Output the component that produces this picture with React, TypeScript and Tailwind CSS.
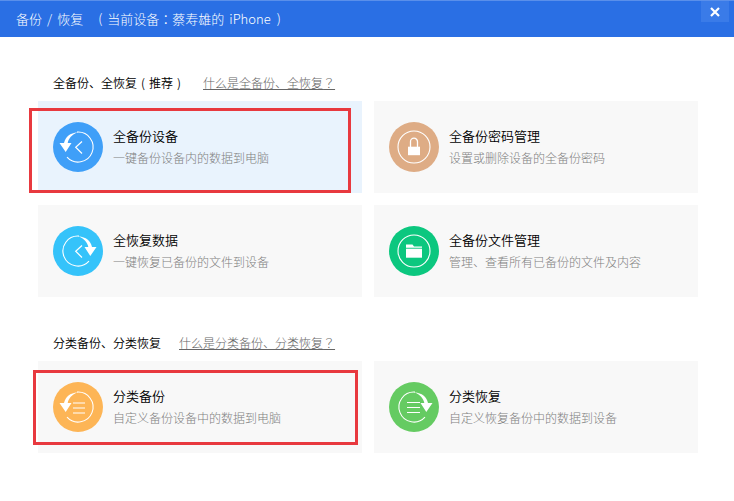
const font = "[font-family:'Noto_Sans_CJK_SC','Noto_Sans',sans-serif]"

// centred fullwidth punctuation, the TC cut sets these in the middle of the em
function Tc({ children }: { children: string }) {
  return <span className="[font-family:'Noto_Sans_CJK_TC',sans-serif]">{children}</span>
}

function Paren({ children }: { children: string }) {
  return <span className="inline-block w-[1em] text-center">{children}</span>
}

function RingIcon({ kind }: { kind: 'backup' | 'restore' | 'listBackup' | 'listRestore' }) {
  const isBackup = kind === 'backup' || kind === 'listBackup'
  const isList = kind === 'listBackup' || kind === 'listRestore'
  return (
    <svg viewBox="0 0 50 50" className="size-[50px]" fill="none" stroke="white">
      <g transform={isBackup ? undefined : 'translate(50 0) scale(-1 1)'}>
        <path d="M24 10.100A15 15 0 1 1 14 35.200" strokeWidth="1.100" />
        <path d="M24.500 10.300C17 11 12.500 15 11 21L6.500 21 12.700 30 18.500 21 14.700 21C15.500 16.500 19 12.500 24.500 10.300Z" fill="white" stroke="none" />
      </g>
      {isList ? (
        <path d={isBackup ? 'M20 21H32M20 26H32M20 31H32' : 'M18 20.500H31M18 25.500H31M18 30.500H31'} strokeWidth="1.100" />
      ) : (
        <path d="M29 19.500L22.700 25.300 29 31.500" strokeWidth="1.200" />
      )}
    </svg>
  )
}

function LockIcon() {
  return (
    <svg viewBox="0 0 50 50" className="size-[50px]" fill="none" stroke="white">
      <circle cx="25" cy="25" r="16" strokeWidth="1.100" />
      <path d="M21.500 25v-5.300a3.500 3.500 0 0 1 7 0V25" strokeWidth="1.300" />
      <rect x="19" y="24.700" width="12" height="8.500" fill="white" stroke="none" />
    </svg>
  )
}

function FolderIcon() {
  return (
    <svg viewBox="0 0 50 50" className="size-[50px]" fill="none" stroke="white">
      <circle cx="25" cy="25" r="16" strokeWidth="1.100" />
      <path d="M17 18.500h6.500l1.500 2H33v1.300H17z" fill="white" stroke="none" />
      <rect x="17" y="22.700" width="16" height="9" fill="white" stroke="none" />
    </svg>
  )
}

function Card({
  color,
  icon,
  title,
  sub,
  bg = 'bg-[#f8f8f8]',
}: {
  color: string
  icon: React.ReactNode
  title: string
  sub: string
  bg?: string
}) {
  return (
    <div className={`flex h-[92px] w-[324px] items-center pl-[15px] ${bg}`}>
      <div className={`size-[50px] shrink-0 rounded-full ${color}`}>{icon}</div>
      <div className="ml-[10px]">
        <p className="text-[13px] leading-[18px] font-[350] text-black">{title}</p>
        <p className="mt-[4px] text-[12px] leading-[18px] font-light text-[#808080]">{sub}</p>
      </div>
    </div>
  )
}

export default function App() {
  return (
    <div className={`relative h-[501px] w-[734px] overflow-hidden bg-white ${font}`}>
      <header className="flex h-[37px] items-center justify-between border-t border-[#5a8fea] bg-[#2a6fe4] pl-[16px] text-[13px] font-light text-white">
        <span className="whitespace-pre">
          备份<span className="mx-[5px]">/</span>恢复
          <span className="ml-[15px]">(</span>
          <span className="ml-[5px]">当前设备</span>
          <Tc>：</Tc>蔡寿雄的<span className="ml-[5px]">iPhone</span>
          <span className="ml-[6px]">)</span>
        </span>
        <button className="mr-[5px] mb-[15px] grid h-[21px] w-[28px] place-items-center bg-[#3a7be8]">
          <svg viewBox="0 0 10 10" className="size-[10px]" stroke="white" strokeWidth="2.200">
            <path d="M1 1L9 9M9 1L1 9" />
          </svg>
        </button>
      </header>

      <main className="pl-[38px]">
        <div className="flex h-[64px] items-end pb-[9px] pl-[15px] text-[12px] leading-[18px]">
          <span className="font-[350] text-black">
            全备份、全恢复<Paren>(</Paren>推荐<Paren>)</Paren>
          </span>
          <a className="ml-[18px] font-light text-[#666] underline">
            什么是全备份、全恢复<Tc>？</Tc>
          </a>
        </div>
        <div className="grid w-[660px] grid-cols-[324px_324px] gap-x-[12px] gap-y-[12px]">
          <Card color="bg-[#3f9ff8]" icon={<RingIcon kind="backup" />} title="全备份设备" sub="一键备份设备内的数据到电脑" bg="bg-[#e9f3fd]" />
          <Card color="bg-[#deac85]" icon={<LockIcon />} title="全备份密码管理" sub="设置或删除设备的全备份密码" />
          <Card color="bg-[#35c3fa]" icon={<RingIcon kind="restore" />} title="全恢复数据" sub="一键恢复已备份的文件到设备" />
          <Card color="bg-[#0cc77f]" icon={<FolderIcon />} title="全备份文件管理" sub="管理、查看所有已备份的文件及内容" />
        </div>
        <div className="flex h-[64px] items-end pb-[9px] pl-[15px] text-[12px] leading-[18px]">
          <span className="font-[350] text-black">分类备份、分类恢复</span>
          <a className="ml-[18px] font-light text-[#666] underline">
            什么是分类备份、分类恢复<Tc>？</Tc>
          </a>
        </div>
        <div className="grid w-[660px] grid-cols-[324px_324px] gap-x-[12px]">
          <Card color="bg-[#fdb556]" icon={<RingIcon kind="listBackup" />} title="分类备份" sub="自定义备份设备中的数据到电脑" />
          <Card color="bg-[#65cb62]" icon={<RingIcon kind="listRestore" />} title="分类恢复" sub="自定义恢复备份中的数据到设备" />
        </div>
      </main>

      <div className="absolute top-[108px] left-[29px] h-[85px] w-[322px] border-[3px] border-[#e8393f]" />
      <div className="absolute top-[370px] left-[33px] h-[75px] w-[325px] border-[3px] border-[#e8393f]" />
    </div>
  )
}
